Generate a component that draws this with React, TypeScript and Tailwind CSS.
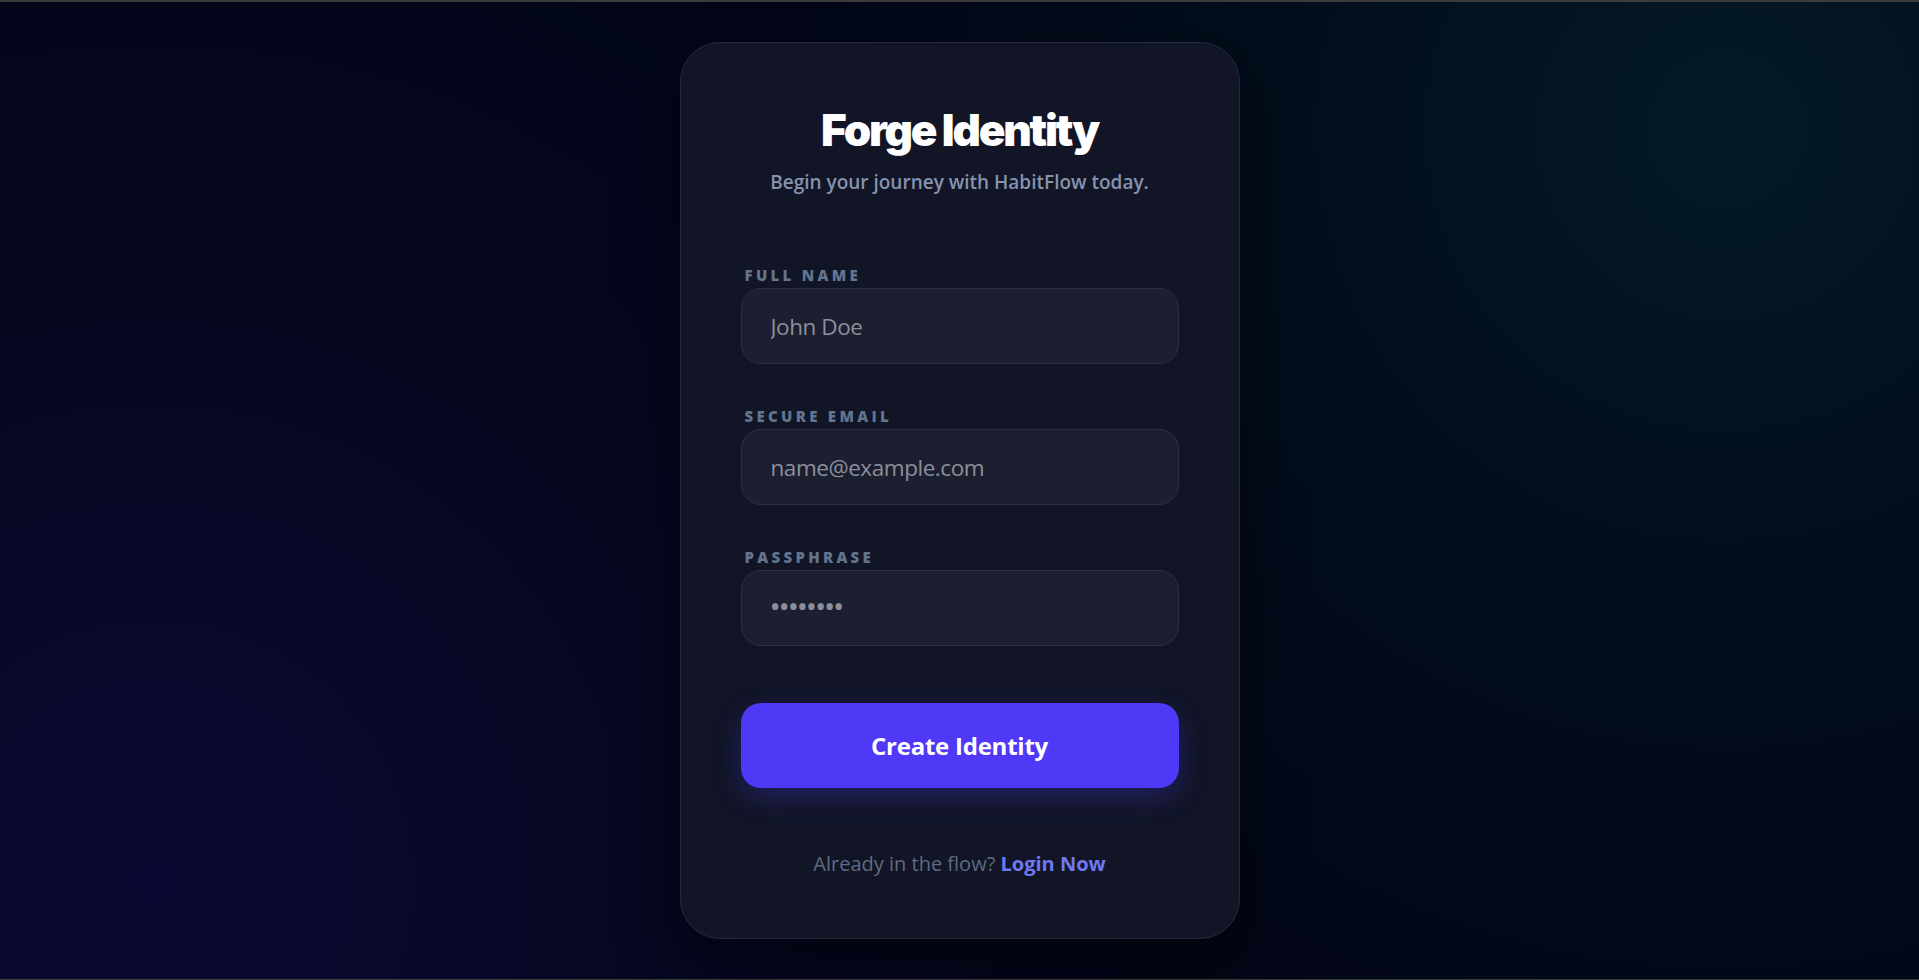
import React from "react";

function Field({
  label,
  placeholder,
  type = "text",
  dots = false,
}: {
  label: string;
  placeholder: string;
  type?: string;
  dots?: boolean;
}) {
  return (
    <div className="flex flex-col">
      <label className="block pl-[4px] text-[15px] leading-[20px] font-extrabold uppercase tracking-[0.22em] text-[#62748e] mb-[3px]">
        {label}
      </label>
      <input
        type={type}
        placeholder={placeholder}
        className={
          dots
            ? "h-[76px] w-full rounded-[20px] border border-[#2c3042] bg-[#1c1f2f] pl-[28px] pr-[29px] text-[22.5px] text-white outline-none placeholder:text-[#8c8f9b] placeholder:text-[30px] placeholder:tracking-[-2.2px]"
            : "h-[76px] w-full rounded-[20px] border border-[#2c3042] bg-[#1c1f2f] pl-[29px] pr-[29px] text-[22.5px] tracking-[-0.02em] text-white outline-none placeholder:text-[#8c8f9b]"
        }
      />
    </div>
  );
}

export default function App() {
  return (
    <div className="h-screen w-full flex items-center justify-center border-t-2 border-b border-[#3b3b3b] font-['Open_Sans','Noto_Sans',sans-serif] bg-[#020617] bg-[radial-gradient(circle_at_8%_90%,rgba(12,10,56,0.85)_0%,rgba(9,9,46,0.5)_25%,rgba(2,6,23,0)_55%),radial-gradient(circle_at_90%_13%,rgba(4,30,40,0.85)_0%,rgba(3,22,32,0.5)_22%,rgba(2,6,23,0)_50%)]">
      <div className="w-[560px] rounded-[40px] border border-[#262a3c] bg-[#111526] px-[60px] py-[60px] shadow-[0_25px_60px_rgba(0,0,0,0.5)]">
        <h1 className="text-center font-['Inter','Open_Sans',sans-serif] text-[44px] leading-[54px] font-black tracking-[-0.05em] text-white">
          Forge Identity
        </h1>
        <p className="mt-[12px] text-center text-[19px] leading-[26px] font-semibold text-[#8593af]">
          Begin your journey with HabitFlow today.
        </p>

        <div className="mt-[70px] flex flex-col gap-[42px]">
          <Field label="Full Name" placeholder="John Doe" />
          <Field label="Secure Email" placeholder="name@example.com" type="email" />
          <Field label="Passphrase" placeholder="••••••••" type="password" dots />
        </div>

        <button className="mt-[57px] h-[85px] w-full rounded-[20px] bg-[#4f39f6] text-[24px] tracking-[-0.01em] font-bold text-white shadow-[0_10px_28px_rgba(79,57,246,0.28)]">
          Create Identity
        </button>

        <p className="mt-[62px] text-center text-[20px] leading-[28px] text-[#5f6b82]">
          Already in the flow? <a className="font-bold text-[#6f78f2]">Login Now</a>
        </p>
      </div>
    </div>
  );
}
